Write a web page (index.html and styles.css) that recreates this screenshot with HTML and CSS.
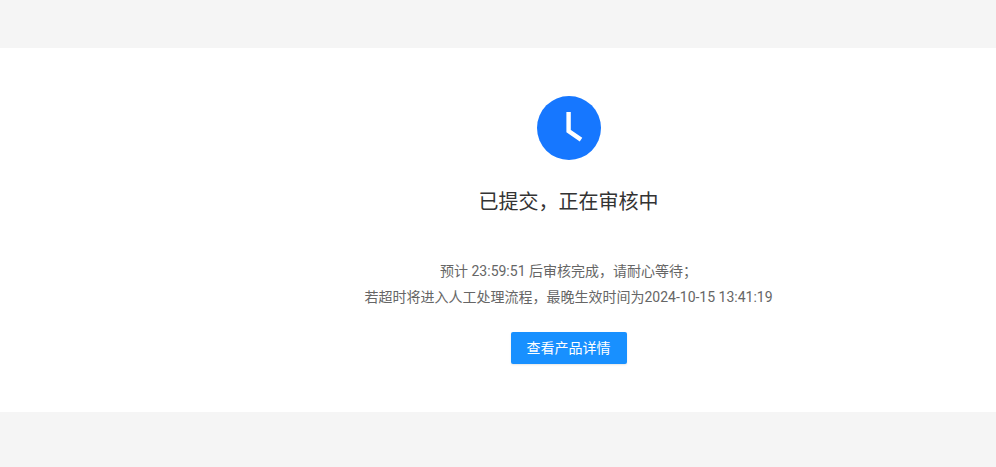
FILE: index.html
```html
<!DOCTYPE html>
<html lang="zh-CN">
<head>
  <meta charset="UTF-8" />
  <title>已提交</title>
  <link rel="stylesheet" href="styles.css">
</head>
<body>
  <div class="panel">
    <div class="status-icon">
      <svg width="64" height="64" viewBox="0 0 64 64">
        <circle cx="32" cy="32" r="32" fill="#1677ff" />
        <path d="M31.6 16V35L44 43.6" fill="none" stroke="#fff" stroke-width="4.4" />
      </svg>
    </div>
    <h2 class="title">已提交，正在审核中</h2>
    <div class="desc">
      <p>预计 23:59:51 后审核完成，请耐心等待；</p>
      <p>若超时将进入人工处理流程，最晚生效时间为2024-10-15 13:41:19</p>
    </div>
    <button class="btn" type="button">查看产品详情</button>
  </div>
</body>
</html>
```

FILE: styles.css
```css
html, body {
  height: 100%;
}

body {
  margin: 0;
  padding: 48px 0 55px;
  box-sizing: border-box;
  background-color: #f5f5f5;
  font-family: Roboto, "Noto Sans CJK SC", sans-serif;
  overflow: hidden;
}

.panel {
  height: 364px;
  padding-top: 48px;
  box-sizing: border-box;
  background-color: #fff;
  display: flex;
  flex-direction: column;
  align-items: center;
  padding-left: 141px;
}

.status-icon {
  height: 64px;
}

.title {
  margin: 27px 0 0;
  font-size: 20px;
  line-height: 30px;
  font-weight: 400;
  color: #333;
}

.desc {
  margin-top: 41px;
  font-size: 14px;
  line-height: 26px;
  color: #666;
  text-align: center;
}

.desc p {
  margin: 0;
}

.btn {
  margin-top: 22px;
  width: 116px;
  height: 32px;
  padding: 0 0 2px;
  border: 0;
  border-radius: 2px;
  background-color: #1890ff;
  color: #fff;
  font-family: inherit;
  font-size: 14px;
  box-shadow: 0 1px 2px rgba(0, 0, 0, 0.1);
}
```
